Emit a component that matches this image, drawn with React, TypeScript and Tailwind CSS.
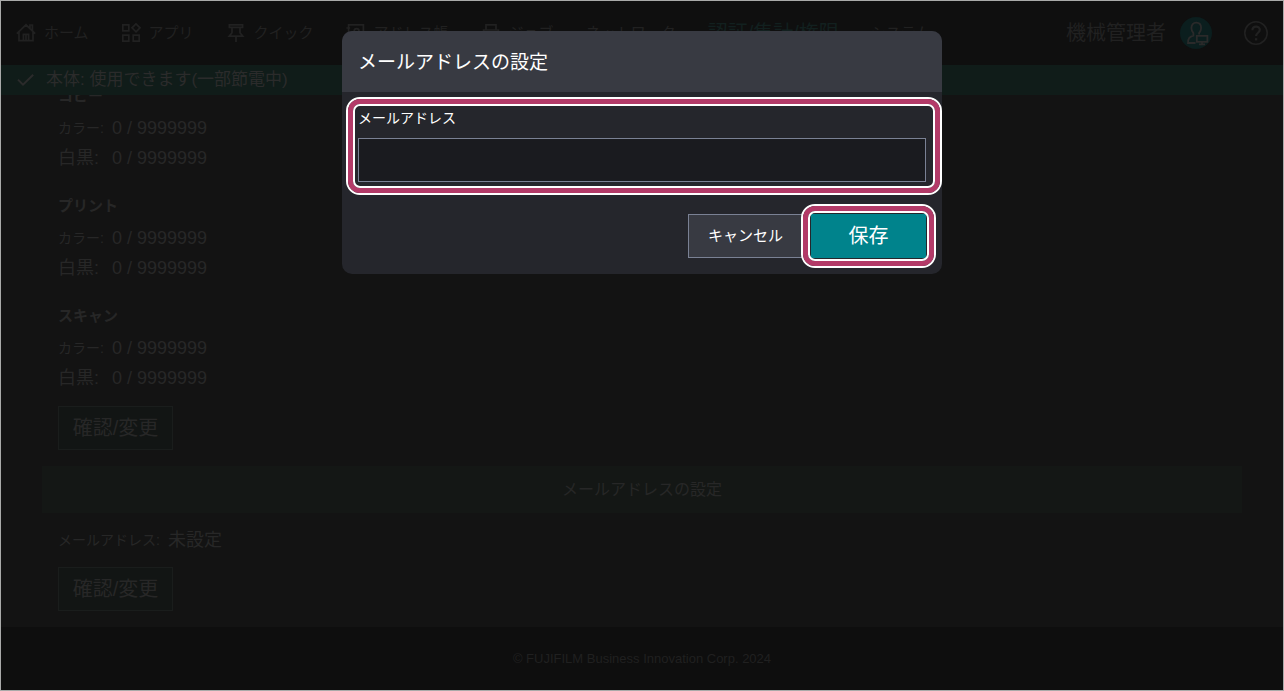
import type { ReactNode } from "react";

const fontStack =
  "font-['Liberation_Sans','Noto_Sans_CJK_JP',sans-serif]";

function Icon({ children }: { children: ReactNode }) {
  return (
    <svg
      className="size-5 shrink-0"
      viewBox="0 0 20 20"
      fill="none"
      stroke="currentColor"
      strokeWidth="1.7"
      aria-hidden="true"
    >
      {children}
    </svg>
  );
}

const HomeIcon = () => (
  <Icon>
    <path d="M.8 10.6 10 1.8l9.2 8.8M3 9v8.7h14V9M14 5.4V2h2.4v5.8M7.4 17.7v-6.3h5.2v6.3M10 11.4v6.3" />
  </Icon>
);

const AppsIcon = () => (
  <Icon>
    <path d="M1.8 1.8h6v6h-6zM1.8 12.2h6v6h-6zM12.2 12.2h6v6h-6zM15 .8 19 4.8l-4 4-4-4z" />
  </Icon>
);

const PinIcon = () => (
  <Icon>
    <path d="M3.4 1.8h13.2v2.6H3.4zM6 4.4v5.4L3.2 13.2h13.6L14 9.8V4.4M10 13.2V19" />
  </Icon>
);

const BookIcon = () => (
  <Icon>
    <path d="M2.6 1.8h14.8v16H2.6zM.4 5h3.8M.4 10h3.8M.4 15h3.8" />
    <circle cx="10.6" cy="8" r="2.4" />
    <path d="M6.4 15c0-5.6 8.4-5.6 8.4 0" />
  </Icon>
);

const JobIcon = () => (
  <Icon>
    <path d="M5 7V1.8h10V7M5 15H2.6V7h14.8v8H15M5 11.6h10v6.6H5z" />
  </Icon>
);

const navItems: { label: string; icon?: ReactNode; active?: boolean }[] = [
  { label: "ホーム", icon: <HomeIcon /> },
  { label: "アプリ", icon: <AppsIcon /> },
  { label: "クイック", icon: <PinIcon /> },
  { label: "アドレス帳", icon: <BookIcon /> },
  { label: "ジョブ", icon: <JobIcon /> },
  { label: "ネットワーク" },
  { label: "認証/集計/権限", active: true },
  { label: "システム" },
];

function Header() {
  return (
    <header className="flex h-16 shrink-0 items-center justify-between bg-[#0f0f0f] px-[15px] text-[#212121]">
      <nav className="flex items-center gap-8 whitespace-nowrap">
        {navItems.map((item) => (
          <a
            key={item.label}
            href="#"
            className={
              item.active
                ? "text-xl text-[#12201f]"
                : "flex items-center gap-2 text-[15px]"
            }
          >
            {item.icon}
            {item.label}
          </a>
        ))}
      </nav>
      <div className="flex items-center">
        <span className="text-xl">機械管理者</span>
        <button
          type="button"
          aria-label="機械管理者"
          className="ml-3.5 flex size-8 items-center justify-center rounded-full bg-[#0b1e1e] text-[#2a2a2a]"
        >
          <svg className="size-8" viewBox="0 0 32 32" fill="none" stroke="currentColor" strokeWidth="1.8" aria-hidden="true">
            <path d="M15.5 26H8c0-4.6 1.2-6 5.4-7.4v-2.4c-1.3-1.4-2-3-2-5.2 0-3.4 1.9-5.4 4.8-5.4s4.9 2 4.9 5.4c0 2.2-.8 3.8-2 5.2v1.2" />
            <path d="M16.8 18.9h10.6v6H16.8zM22 24.9v2.3M19 27.3h6" />
          </svg>
        </button>
        <button type="button" aria-label="ヘルプ" className="ml-8">
          <svg className="size-6" viewBox="0 0 24 24" fill="none" stroke="currentColor" strokeWidth="1.6" aria-hidden="true">
            <circle cx="12" cy="12" r="11.2" />
            <path d="M8.400 9.300c0-5 7.400-4.700 7.400-.5 0 3-3.700 2.900-3.700 6.100" strokeWidth="2.2" />
            <path d="M12.100 17.200v2.200" strokeWidth="2.4" />
          </svg>
        </button>
      </div>
    </header>
  );
}

function StatusBar() {
  return (
    <div className="flex h-[30px] shrink-0 items-center gap-3 bg-[#101c19] px-4 text-[17px] text-[#2b2b2b]">
      <svg className="h-3 w-[17px]" viewBox="0 0 17 12" fill="none" stroke="currentColor" strokeWidth="2" aria-hidden="true">
        <path d="m1 5.600 5 5L16.200.8" />
      </svg>
      本体: 使用できます(一部節電中)
    </div>
  );
}

function Row({ label, value, kanji }: { label: string; value: string; kanji?: boolean }) {
  return (
    <div className="flex h-[30px] items-center">
      <dt className={kanji ? "w-[54px] text-lg" : "w-[54px] text-sm"}>{label}:</dt>
      <dd className="text-lg">{value}</dd>
    </div>
  );
}

function UsageGroup({ title }: { title: string }) {
  return (
    <section className="mb-5">
      <h3 className="flex h-[30px] items-center pb-1 text-[15px] font-bold">{title}</h3>
      <dl>
        <Row label="カラー" value="0 / 9999999" />
        <Row label="白黒" value="0 / 9999999" kanji />
      </dl>
    </section>
  );
}

function EditButton() {
  return (
    <button
      type="button"
      className="h-11 w-[115px] border border-[#1a1d1c] bg-[#121514] text-xl"
    >
      確認/変更
    </button>
  );
}

function Dialog() {
  return (
    <div className="fixed inset-0 flex items-start justify-center pt-[31px]">
      <div
        role="dialog"
        aria-modal="true"
        aria-labelledby="dialog-title"
        className="w-full max-w-[600px] rounded-[10px] bg-[#25262c] text-white"
      >
        <h2
          id="dialog-title"
          className="flex h-[61px] items-center rounded-t-[10px] bg-[#383a42] px-4 pt-1 text-[19px]"
        >
          メールアドレスの設定
        </h2>
        <form onSubmit={(e) => e.preventDefault()}>
          <div className="relative px-4 pt-3">
            <label htmlFor="mail" className="block h-[34px] text-sm leading-7">
              メールアドレス
            </label>
            <input
              id="mail"
              type="email"
              className="block h-11 w-full border border-[#7a8194] bg-[#1a1b1f] px-3 text-lg outline-none"
            />
            <div className="pointer-events-none absolute -bottom-[13px] left-1 right-0 top-[5px] rounded-[14px] border-2 border-white">
              <div className="h-full rounded-[12px] border-[5px] border-[#b33a68]">
                <div className="h-full rounded-[7px] border-2 border-white" />
              </div>
            </div>
          </div>
          <div className="flex justify-end px-4 pb-4 pt-8">
            <button
              type="button"
              className="h-11 w-[115px] border border-[#7a8194] bg-[#383a42] text-[15px]"
            >
              キャンセル
            </button>
            <div className="relative ml-2">
              <button type="submit" className="h-11 w-[115px] bg-[#00838c] text-xl">
                保存
              </button>
              <div className="pointer-events-none absolute -inset-[10px] rounded-[14px] border-2 border-white">
                <div className="h-full rounded-[12px] border-[5px] border-[#b33a68]">
                  <div className="h-full rounded-[7px] border-2 border-white" />
                </div>
              </div>
            </div>
          </div>
        </form>
      </div>
    </div>
  );
}

export default function App() {
  return (
    <div
      className={`flex h-screen flex-col overflow-hidden border border-[#a9aaa9] bg-[#131313] text-[#272727] ${fontStack}`}
    >
      <Header />
      <StatusBar />
      <main className="flex min-h-0 flex-1 flex-col justify-end overflow-hidden px-[41px]">
        <div className="px-4">
          <UsageGroup title="コピー" />
          <UsageGroup title="プリント" />
          <UsageGroup title="スキャン" />
          <div className="-mt-[7px]">
            <EditButton />
          </div>
        </div>
        <h2 className="mt-4 flex h-[47px] shrink-0 items-center justify-center bg-[#141715] text-base">
          メールアドレスの設定
        </h2>
        <div className="px-4 pb-4 pt-3">
          <div className="flex h-[30px] items-center gap-2 whitespace-nowrap">
            <span className="text-sm">メールアドレス:</span>
            <span className="text-lg">未設定</span>
          </div>
          <div className="mt-3">
            <EditButton />
          </div>
        </div>
      </main>
      <footer className="flex h-[63px] shrink-0 items-center justify-center bg-[#0e0e0e] text-[13px] text-[#202020]">
        © FUJIFILM Business Innovation Corp. 2024
      </footer>
      <Dialog />
    </div>
  );
}
